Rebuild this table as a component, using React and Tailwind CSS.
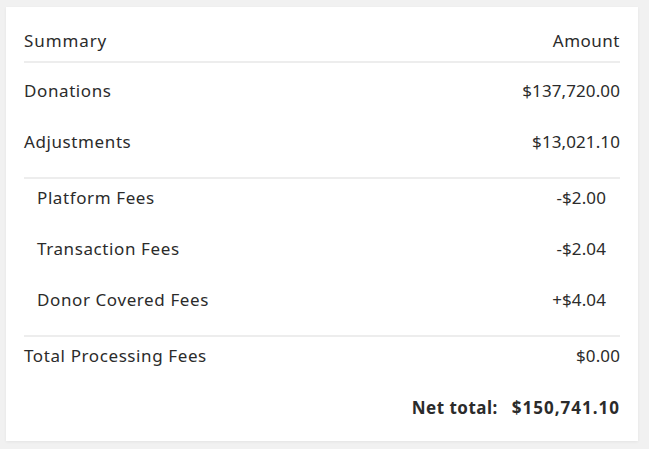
const topRows = [
  { label: 'Donations', amount: '$137,720.00' },
  { label: 'Adjustments', amount: '$13,021.10' },
];

const feeRows = [
  { label: 'Platform Fees', amount: '-$2.00' },
  { label: 'Transaction Fees', amount: '-$2.04' },
  { label: 'Donor Covered Fees', amount: '+$4.04' },
];

const Row = ({ label, amount }) => (
  <div className="flex items-center justify-between h-6 leading-6">
    <span className="tracking-[0.6px]">{label}</span>
    <span className="tracking-[0.1px]">{amount}</span>
  </div>
);

export default function App() {
  return (
    <div className="w-[649px] h-[449px] bg-[#f1f1f1] pt-[7px] pl-[6px]">
      <div
        className="w-[632px] h-[434px] bg-white px-[18px] pt-[22px] pb-[22px] text-[17px] text-[#2b2b2b] shadow-[0_1px_3px_rgba(0,0,0,0.06)]"
        style={{ fontFamily: '"Noto Sans", sans-serif' }}
      >
        {/* header */}
        <div className="flex items-center justify-between h-6 leading-6">
          <span className="tracking-[0.9px]">Summary</span>
          <span className="tracking-[0.5px]">Amount</span>
        </div>
        <div className="mt-2 border-b-2 border-[#ededed]" />

        <div className="pt-4 pb-[23px] flex flex-col gap-[27px] border-b-2 border-[#ededed]">
          {topRows.map((r) => (
            <Row key={r.label} {...r} />
          ))}
        </div>

        <div className="pt-[7px] pb-[23px] pl-[13px] pr-[14px] flex flex-col gap-[27px] border-b-2 border-[#ededed]">
          {feeRows.map((r) => (
            <Row key={r.label} {...r} />
          ))}
        </div>

        <div className="pt-[7px]">
          <Row label="Total Processing Fees" amount="$0.00" />
        </div>

        <div className="mt-[28px] flex justify-end items-center h-6 leading-6 font-bold gap-[14px]">
          <span className="tracking-[0.5px]">Net total:</span>
          <span className="tracking-[1px]">$150,741.10</span>
        </div>
      </div>
    </div>
  );
}
